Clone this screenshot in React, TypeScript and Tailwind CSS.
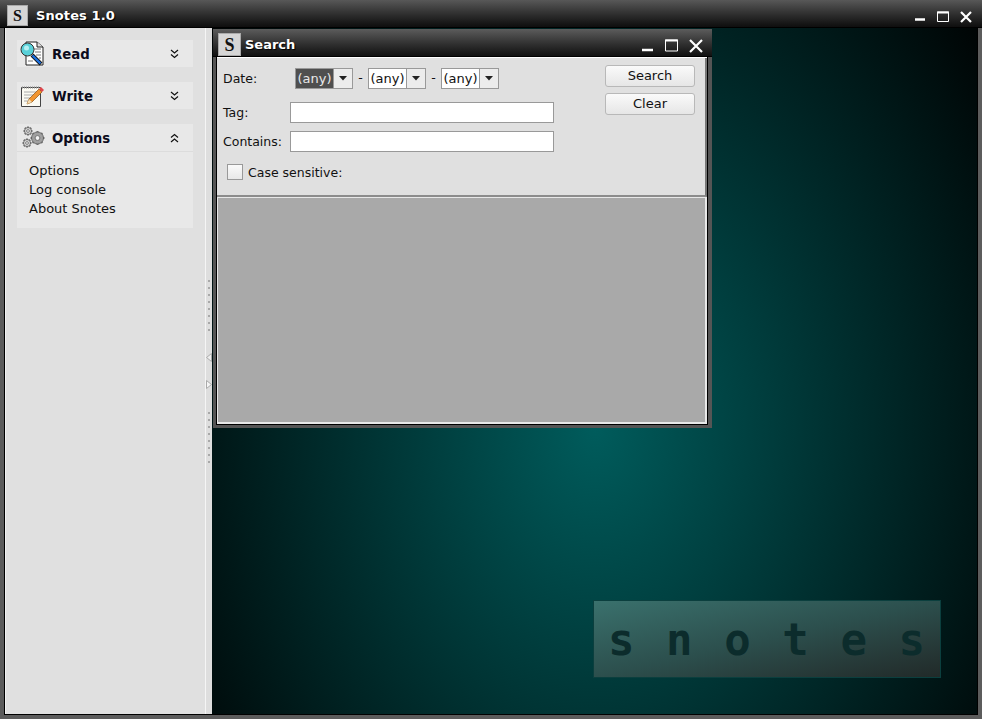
const dejavu = "font-['DejaVu_Sans',sans-serif]";

function DoubleChevron({ up }: { up?: boolean }) {
  return (
    <svg width="9" height="10" viewBox="0 0 9 10" fill="none" stroke="#111" strokeWidth="1.2" className={up ? "rotate-180" : ""}>
      <path d="M1 1l3.5 3L8 1" />
      <path d="M1 5.500l3.5 3L8 5.500" />
    </svg>
  );
}

function ReadIcon() {
  return (
    <svg width="25" height="25" viewBox="0 0 25 25" className="ml-[3px]">
      <path d="M6 1h11l6 5v18H6z" fill="#fff" stroke="#222" />
      <path d="M17 1v5h6" fill="#ddd" stroke="#222" />
      <path d="M13 8h8M15 11h6M16 14h5M19 17h2M8 20h5" stroke="#777" />
      <path d="M12 14l9 9" stroke="#111" strokeWidth="4" />
      <path d="M12.500 14.500l8 8" stroke="#1a6fe0" strokeWidth="2.400" />
      <circle cx="7.500" cy="8.500" r="6.500" fill="#58d0d8" stroke="#333" />
      <circle cx="6.500" cy="7" r="2.500" fill="#b5f0f2" />
    </svg>
  );
}

function WriteIcon() {
  return (
    <svg width="23" height="24" viewBox="0 0 23 24" className="ml-[4px]">
      <path d="M0.500 3.500h19v19h-19z" fill="#fbfaf2" stroke="#444" />
      <path d="M1 3.500h18" stroke="#888" strokeWidth="2" strokeDasharray="1 1" />
      <path d="M3 8h14M3 11h11M3 14h7M3 17h5" stroke="#aaa" />
      <path d="M6 20l2-5L18 5l3 3-10 10z" fill="#f2952e" stroke="#8a5212" strokeWidth="0.700" />
      <path d="M18 5l2-2 3 3-2 2z" fill="#e0474c" />
      <path d="M6 20l2-5 3 3z" fill="#f5dcb0" />
    </svg>
  );
}

function Gear({ x, y, r, fill }: { x: number; y: number; r: number; fill: string }) {
  const teeth = [0, 45, 90, 135, 180, 225, 270, 315];
  return (
    <g>
      {teeth.map(a => (
        <rect key={a} x={x - 1} y={y - r - 1} width="2" height="3" fill="#777" transform={`rotate(${a} ${x} ${y})`} />
      ))}
      <circle cx={x} cy={y} r={r} fill={fill} stroke="#555" strokeWidth="0.800" />
      <circle cx={x} cy={y} r={r * 0.4} fill="#f2f2f2" stroke="#555" strokeWidth="0.700" />
    </g>
  );
}

function OptionsIcon() {
  return (
    <svg width="23" height="23" viewBox="0 0 23 23" className="ml-[5px]">
      <Gear x={6} y={5} r={3.500} fill="#d8d8d8" />
      <Gear x={5} y={17} r={3.500} fill="#d8d8d8" />
      <Gear x={15.500} y={12} r={6} fill="#a0a0a0" />
    </svg>
  );
}

function SLogo({ size }: { size: number }) {
  return (
    <div
      className="flex items-center justify-center bg-[#d6d6d6] border border-[#aaaaaa] font-['Liberation_Serif',serif] font-bold leading-none text-[#111]"
      style={{ width: size, height: size, fontSize: size - 5 }}
    >
      S
    </div>
  );
}

// s = close button size, the other two are drawn inside the same height
function WinButtons({ s, minW, maxW, minY, maxTop, maxBottom }: { s: number; minW: number; maxW: number; minY: number; maxTop: number; maxBottom: number }) {
  return (
    <div className="flex gap-[12px]">
      <svg width={minW} height={s} viewBox={`0 0 ${minW} ${s}`}>
        <path d={`M0 ${minY}h${minW}`} stroke="#fff" strokeWidth="2.500" />
      </svg>
      <svg width={maxW} height={s} viewBox={`0 0 ${maxW} ${s}`} fill="none" className="-mr-[1px]">
        <path d={`M0.500 ${maxTop}H${maxW - 0.5}V${maxBottom}H0.500z`} stroke="#fff" />
        <path d={`M0 ${maxTop + 0.5}H${maxW}`} stroke="#fff" strokeWidth="2" />
      </svg>
      <svg width={s} height={s} viewBox={`0 0 ${s} ${s}`} fill="none">
        <path d={`M1 1L${s - 1} ${s - 1}M${s - 1} 1L1 ${s - 1}`} stroke="#fff" strokeWidth="2.200" />
      </svg>
    </div>
  );
}

function Section({ title, icon, open, children }: { title: string; icon: React.ReactNode; open?: boolean; children?: React.ReactNode }) {
  return (
    <div className="bg-[#e8e8e8]">
      <div className={"flex items-center pr-[14px] " + (open ? "border-b border-[#dcdcdc] h-[28px]" : "h-[27px]")}>
        <div className="w-[35px] flex shrink-0">{icon}</div>
        <span className="flex-1 mt-[2px] font-bold text-[13.300px] text-[#0c0c1c]">{title}</span>
        <DoubleChevron up={open} />
      </div>
      {children}
    </div>
  );
}

function Combo({ selected }: { selected?: boolean }) {
  return (
    <div className="h-[21px] flex border border-[#999] bg-white">
      <div className={"w-[37px] flex items-center justify-center text-[13px] " + (selected ? "bg-[#4f4f4f] text-[#e8e8e8]" : "text-[#111]")}>(any)</div>
      <div className="w-[19px] flex items-center justify-center border-l border-[#999] bg-[#ececec]">
        <svg width="8" height="5" viewBox="0 0 8 5"><path d="M0 0h8L4 4.500z" fill="#222" /></svg>
      </div>
    </div>
  );
}

function Btn({ label }: { label: string }) {
  return (
    <div className="h-[22px] w-[90px] flex items-center justify-center rounded-[3px] border border-[#b8b8b8] bg-gradient-to-b from-[#fafafa] to-[#e6e6e6] text-[13px] text-[#111]">
      {label}
    </div>
  );
}

function SearchWindow() {
  return (
    <div className="absolute left-[1px] top-[1px] w-[499px] h-[399px] flex flex-col">
      <div className="h-[28px] shrink-0 flex items-end justify-between bg-gradient-to-b from-[#5c5c5c] to-[#111] border-b border-black pr-[9px]">
        <div className="flex items-center">
          <div className="ml-[5px] mr-[4px]"><SLogo size={23} /></div>
          <span className="font-bold text-[13px] text-white [text-shadow:1px_1px_1px_#000]">Search</span>
        </div>
        <div className="pb-[3px]">
          <WinButtons s={14} minW={11} maxW={13} minY={11} maxTop={1} maxBottom={12} />
        </div>
      </div>
      <div className="flex-1 flex flex-col min-h-0 border-l-[3px] border-r-[4px] border-b-[3px] border-[#555]">
        <div className="flex-1 flex flex-col min-h-0 border-x border-b border-black bg-[#e0e0e0]">
          <div className="flex-1 flex flex-col min-h-0 border-t border-white">
            <div className="h-[139px] shrink-0 flex justify-between border-b-[2px] border-r-[2px] border-[#8c8c8c] border-r-[#777] pl-[6px] pr-[10px] text-[12.500px] text-[#111]">
              <div className="flex flex-col">
                <div className="flex items-center h-[21px] mt-[10px]">
                  <span className="w-[72px] mt-[2px]">Date:</span>
                  <Combo selected />
                  <span className="w-[15px] text-center">-</span>
                  <Combo />
                  <span className="w-[15px] text-center">-</span>
                  <Combo />
                </div>
                <div className="flex items-center h-[21px] mt-[13px]">
                  <span className="w-[67px] mt-[2px]">Tag:</span>
                  <div className="w-[264px] h-[21px] bg-white border border-[#999]" />
                </div>
                <div className="flex items-center h-[21px] mt-[8px]">
                  <span className="w-[67px] mt-[2px]">Contains:</span>
                  <div className="w-[264px] h-[21px] bg-white border border-[#999]" />
                </div>
                <div className="flex items-center mt-[10px] ml-[4px]">
                  <div className="w-[16px] h-[16px] border border-[#999] bg-gradient-to-b from-[#fafafa] to-[#e8e8e8] mr-[5px]" />
                  <span className="mt-[2px]">Case sensitive:</span>
                </div>
              </div>
              <div className="flex flex-col gap-[6px] mt-[7px]">
                <Btn label="Search" />
                <Btn label="Clear" />
              </div>
            </div>
            <div className="flex-1 bg-[#a9a9a9] border border-[#e8e8e8] border-b-2 border-r-2" />
          </div>
        </div>
      </div>
    </div>
  );
}

function GripDots() {
  return (
    <>
      {Array.from({ length: 8 }, (_, i) => (
        <div key={i} className="w-[2px] h-[2px] bg-[#a8a8a8] mb-[5px]" />
      ))}
    </>
  );
}

export default function App() {
  return (
    <div className={"w-[982px] h-[719px] flex flex-col bg-black overflow-hidden " + dejavu}>
      <div className="h-[28px] shrink-0 flex items-end justify-between bg-gradient-to-b from-[#585858] to-[#0e0e0e] border-b border-black pr-[10px]">
        <div className="flex items-center pb-[1px]">
          <div className="ml-[7px] mr-[8px]"><SLogo size={21} /></div>
          <span className="font-bold text-[13px] text-white tracking-[0.100px] [text-shadow:1px_1px_1px_#000]">Snotes 1.0</span>
        </div>
        <div className="pb-[4px]">
          <WinButtons s={12} minW={10} maxW={12} minY={8.500} maxTop={1} maxBottom={10.500} />
        </div>
      </div>
      <div className="flex-1 flex min-h-0 border-x-4 border-b-4 border-[#5c5c5c]">
        <div className="flex-1 flex min-w-0 border-x border-b border-black">
          <div className="w-[200px] shrink-0 bg-[#e0e0e0] border-l border-[#f2f2f2] pt-[12px] pl-[11px] pr-[12px] flex flex-col gap-[15px] text-[13px] text-[#111]">
            <Section title="Read" icon={<ReadIcon />} />
            <Section title="Write" icon={<WriteIcon />} />
            <Section title="Options" icon={<OptionsIcon />} open>
              <div className="flex flex-col gap-[1px] pl-[12px] pt-[10px] pb-[10px] leading-[18px]">
                <span>Options</span>
                <span>Log console</span>
                <span>About Snotes</span>
              </div>
            </Section>
          </div>
          <div className="w-[7px] shrink-0 bg-[#dedede] border-l border-[#f5f5f5] flex flex-col items-center pt-[252px]">
            <GripDots />
            <svg width="6" height="9" viewBox="0 0 6 9" className="mt-[17px]"><path d="M5.500 0.500v8L0.500 4.500z" fill="#eee" stroke="#aaa" /></svg>
            <svg width="6" height="9" viewBox="0 0 6 9" className="mt-[18px]"><path d="M0.500 0.500v8L5.500 4.500z" fill="#f5f5f5" stroke="#aaa" /></svg>
            <div className="h-[23px] shrink-0" />
            <GripDots />
          </div>
          <div className="flex-1 relative bg-[radial-gradient(ellipse_510px_680px_at_383px_400px,#005c5c_0%,#000000_100%)]">
            <SearchWindow />
            <div className="absolute left-[381px] top-[572px] w-[348px] h-[78px] flex items-center justify-between pl-[14px] pr-[15px] pt-[2px] border border-[#0b3f3e] bg-gradient-to-br from-[#3a716d] via-[#2c4f4d] to-[#212a29] font-bold text-[44px] leading-none text-[#0c2c2c] font-['DejaVu_Sans_Mono',monospace]">
              {"snotes".split("").map((c, i) => <span key={i}>{c}</span>)}
            </div>
          </div>
        </div>
      </div>
    </div>
  );
}
